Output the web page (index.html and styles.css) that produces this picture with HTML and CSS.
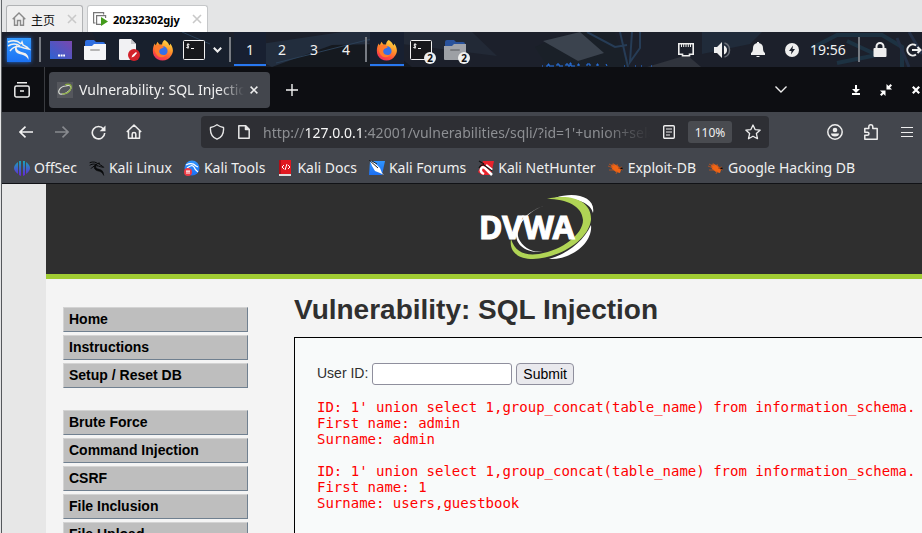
FILE: index.html
```
<!DOCTYPE html>
<html lang="en">
<head>
<meta charset="utf-8">
<title>Vulnerability: SQL Injection</title>
<link rel="stylesheet" href="styles.css">
</head>
<body>
<svg class="defs" aria-hidden="true">
  <defs>
    <linearGradient id="desk" x1="0" y1="1" x2="1" y2="0"><stop offset="0" stop-color="#2d62d2"/><stop offset="1" stop-color="#7b47ae"/></linearGradient>
    <linearGradient id="flame" x1=".8" y1="0" x2=".3" y2="1"><stop offset="0" stop-color="#ffe14a"/><stop offset=".4" stop-color="#ff9a2a"/><stop offset=".75" stop-color="#ff4f38"/><stop offset="1" stop-color="#ec2e63"/></linearGradient>
    <linearGradient id="off" x1="0" y1="0" x2="0" y2="1"><stop offset="0" stop-color="#16a5b8"/><stop offset="1" stop-color="#6722dc"/></linearGradient>
    <linearGradient id="kaliblue" x1="0" y1="0" x2="0" y2="1"><stop offset="0" stop-color="#2f95ff"/><stop offset="1" stop-color="#1c6ff2"/></linearGradient>
    <symbol id="dragon" viewBox="0 0 24 24">
      <path d="M1 4C6 2 11 3 14 6M1 8c5-3 9-2 12 0M3 13c3-4 7-5 11-4M14 6l1-2 1 3 4 2 2 2-5-1-3-1" fill="none" stroke="currentColor" stroke-width="1.5"/>
      <path d="M12 6c-2 1-3 3-2 5 2 4 9 2 11 7 1 2 0 4 1 5-1-3-3-5-6-6-4-1-8-2-8-6 0-3 1-4 4-5z" fill="currentColor"/>
    </symbol>
    <symbol id="firefox" viewBox="0 0 24 24">
      <path d="M14 1c4 3 4 4 5 6 1-1 1-2 1-2 3 4 4 9 1 13a11 11 0 0 1-19 0C0 14 1 8 3 5l1 2 2-4 2 3 3 0c0-2 1-4 3-5z" fill="url(#flame)"/>
      <circle cx="12" cy="13" r="5" fill="#356fe8"/>
      <path d="M3 8c3-2 6-2 8-1l2 2-4 2c-2 2-1 5 1 6 3 1 5 0 6-1-1 3-5 5-9 3-3-2-5-7-4-11z" fill="#ff7a2c"/>
      <path d="M12 7c5 0 7 4 6 8 1-6-2-7-6-8z" fill="#ffd43b"/>
    </symbol>
    <symbol id="term" viewBox="0 0 22 20">
      <rect x=".5" y=".5" width="21" height="19" rx="1" fill="#17181b" stroke="#f1f1f1"/>
      <path d="M6.500 4.700C4.500 3.700 3 5 4.500 5.800S6.500 8 3.300 7.500M5 3.300v5.400M8 8.500h3" fill="none" stroke="#fff"/>
    </symbol>
    <symbol id="folder" viewBox="0 0 22 20">
      <path d="M1 2q0-2 2-2h7l2 2h7q2 0 2 2v5H1z" fill="#2e6ee0"/>
      <path d="M0 6h8l2-2h12v15q0 1-1 1H1q-1 0-1-1z" fill="#f4f5f7"/>
      <path d="M7 10h8" stroke="#b5b5b5" stroke-width="2" stroke-linecap="round"/>
    </symbol>
    <symbol id="bug" viewBox="0 0 16 16">
      <path d="M3 5l3-1 4 2 3 4-1 3-4-1-4-3z" fill="#f06414"/>
      <path d="M0 6l5 2M1 10l5 0M5 3l1 3M9 4l1 3M14 7l-4 1 5 2M8 14l1-3M1 4l4 2" stroke="#c2561e" stroke-width=".8"/>
    </symbol>
  </defs>
</svg>

<div class="vm-tabs">
  <div class="vm-tab">
    <svg width="14" height="14" viewBox="0 0 14 14" fill="none" stroke="#8a8a8a" stroke-width="1.400"><path d="M.7 7.300 7 1l6.300 6.300M2.500 6v7.200h3V8.500h3v4.700h3V6"/></svg>
    <span>主页</span>
    <button aria-label="关闭 主页"><svg width="10" height="10" viewBox="0 0 10 10" stroke="#c9c9c9" stroke-width="1.600"><path d="m1 1 8 8M9 1 1 9"/></svg></button>
  </div>
  <div class="vm-tab active">
    <svg width="15" height="14" viewBox="0 0 15 14" fill="none"><path d="M2.500 11H.6V.6h10v2M8 12.400H3.600V3.600h9V6" stroke="#777" stroke-width="1.200"/><path d="m8 5 7 4.500L8 14z" fill="#439b1b"/></svg>
    <span>20232302gjy</span>
    <button aria-label="关闭"><svg width="10" height="10" viewBox="0 0 10 10" stroke="#c9c9c9" stroke-width="1.600"><path d="m1 1 8 8M9 1 1 9"/></svg></button>
  </div>
</div>

<div class="guest">
  <header class="panel">
    <svg class="wallpaper" viewBox="0 0 920 35" preserveAspectRatio="none" aria-hidden="true">
      <path d="M90 0h135l35 35H110z" fill="#18202d"/><path d="m90 34 110-24M232 16 340 0l55 0-30 10 40 25H270z" fill="#222d3d"/>
      <path d="m270 35 60-22 50-1 30 23z" fill="#15191f"/><path d="m274 31 95-24M180 0l28 12" stroke="#2b4057"/>
      <path d="M395 0h75l25 24-95-12z" fill="#222936"/><path d="m533 15 20-9 25-6h34l14 35h-80z" fill="#1a2028"/>
      <path d="m541 9 37-9 24 21-26 8z" fill="#3b434e"/><path d="m585 0 28 15 12-2M618 0l8 35M630 0l-2 30 10-14V0" fill="none" stroke="#263c56" stroke-width="2"/>
      <path d="m645 35 40-12 14 12z" fill="#30343d"/><path d="M700 0h60l-12 12-48 10z" fill="#202b3a"/>
      <path d="m810 16 25-13h45l20 12v20M835 31l40-8-30-14" fill="none" stroke="#1d3242" stroke-width="4"/>
      <path d="m895 6 12 29M907 0l13 22" stroke="#232f45" stroke-width="3"/>
      <path d="M540 34h1m3 0h2v-2h1v2h5m3 0v-2h2v2h4m3 0v-2h2v2h2v-3h1v3h4m3 0v-2h1v2m8 0v-2h3v2m7 0v-2h1v2m8-2 1 2m17 0h1m10 0h1m5 0h1m9 0h1" fill="none" stroke="#2878f0"/>
    </svg>
    <button class="kali" aria-label="Applications"><svg width="24" height="24"><use href="#dragon"/></svg></button>
    <i class="sep"></i>
    <button class="launch" aria-label="Show desktop"><svg width="22" height="18" viewBox="0 0 22 18"><path d="M0 0h22v18H0z" fill="url(#desk)"/><path d="M8 14.500h7" stroke="#fff" stroke-width="2" stroke-dasharray="2 .6"/></svg></button>
    <button class="launch" aria-label="Files"><svg width="22" height="20"><use href="#folder"/></svg></button>
    <button class="launch" aria-label="Text editor"><svg width="22" height="22" viewBox="0 0 22 22"><path d="M2 0h11l5 5v15q0 1-1 1H2q-1 0-1-1V1q0-1 1-1z" fill="#f1f1f3"/><path d="m13 0 5 5h-5z" fill="#c6c6ca"/><circle cx="16" cy="16" r="6" fill="#d3222b"/><path d="m13.500 18.500 1-2.500 3.500-3 1 1-3 3.500z" fill="#fff"/></svg></button>
    <button class="launch" aria-label="Firefox"><svg width="22" height="22"><use href="#firefox"/></svg></button>
    <button class="launch slim" aria-label="Terminal"><svg width="22" height="20"><use href="#term"/></svg></button>
    <button class="more" aria-label="More terminals"><svg width="9" height="6" viewBox="0 0 9 6" fill="none" stroke="#eee" stroke-width="2"><path d="m.8.8 3.700 3.700L8.200.8"/></svg></button>
    <i class="sep"></i>
    <nav class="spaces">
      <button class="on">1</button><button>2</button><button>3</button><button>4</button>
    </nav>
    <i class="sep"></i>
    <button class="launch on" aria-label="Firefox window"><svg width="22" height="22"><use href="#firefox"/></svg></button>
    <button class="launch" aria-label="Terminal windows"><svg width="22" height="20"><use href="#term"/></svg><b class="badge">2</b></button>
    <button class="launch" aria-label="File windows"><svg class="dim" width="22" height="20"><use href="#folder"/></svg><b class="badge">2</b></button>
    <div class="tray">
      <button aria-label="Network"><svg width="16" height="14" viewBox="0 0 16 14" fill="none" stroke="#eee" stroke-width="1.600"><path d="M.8.8h14.400v10.400h-3.700v1.500h-7v-1.500H.8z"/><path d="M3.500 1v3m2.200-3v3M8 1v3m2.300-3v3m2.200-3v3" stroke-width="1"/></svg></button>
      <button aria-label="Volume"><svg width="18" height="16" viewBox="0 0 18 16"><path d="M1 5h3l5-5v16l-5-5H1z" fill="#eee"/><path d="M11 3.500q3 1.500 3 4.500t-3 4.500z" fill="#eee"/><path d="M11.500 1q5 1.500 5 7t-5 7" fill="none" stroke="#666b74" stroke-width="1.500"/></svg></button>
      <button aria-label="Notifications"><svg width="14" height="15" viewBox="0 0 14 15" fill="#eee"><path d="M6 0h2v1q4 1 4 5 0 4 2 5v2H0v-2q2-1 2-5 0-4 4-5zM5 14h4l-1 1H6z"/></svg></button>
      <button class="power" aria-label="Power"><svg width="14" height="14" viewBox="0 0 14 14"><circle cx="7" cy="7" r="7" fill="#eee"/><path d="M8 2.500 4 8h2.500L6 11.500 10 6H7.500z" fill="#1c212c"/></svg></button>
      <time>19:56</time>
      <i class="sep"></i>
      <button class="lock" aria-label="Lock"><svg width="14" height="15" viewBox="0 0 14 15"><path d="M3.500 8V4.500a3.500 3.500 0 0 1 7 0V8" fill="none" stroke="#eee" stroke-width="2"/><rect x=".5" y="6" width="13" height="9" rx="1" fill="#eee"/></svg></button>
      <button class="lock" aria-label="Log out"><svg width="16" height="14" viewBox="0 0 16 14" fill="none" stroke="#eee" stroke-width="2"><path d="M10 2.500a5.500 5.500 0 1 0 0 9M6 7h8M11.500 4l3 3-3 3"/></svg></button>
    </div>
  </header>

  <div class="tabbar">
    <button class="view" aria-label="Firefox view"><svg width="16" height="16" viewBox="0 0 16 16" fill="none" stroke="#eee" stroke-width="1.500"><path d="M3 .8h10M2.500 4h11q1.700 0 1.700 1.700v7.600q0 1.700-1.700 1.700h-11Q.8 15 .8 13.300V5.700Q.8 4 2.500 4zM6 9h4"/></svg></button>
    <div class="tab">
      <svg width="16" height="16" viewBox="0 0 16 16"><path d="M0 0h16v16H0z" fill="#55575d"/><path d="M9 4C3 4 0 10 3 12c4 1 10-2 11-6 0-3-3-3-5-2" fill="none" stroke="#d7dad2" stroke-width="1.200"/><path d="M8 3c4-2 7 0 6 3-1 4-5 6-9 6" fill="none" stroke="#8bac42" stroke-width="1.200"/></svg>
      <span class="tab-title">Vulnerability: SQL Injection</span>
      <button aria-label="Close tab"><svg width="8" height="8" viewBox="0 0 8 8" stroke="#eee" stroke-width="1.500"><path d="m.6.6 6.800 6.800M7.400.6.6 7.400"/></svg></button>
    </div>
    <button class="plus" aria-label="New tab"><svg width="12" height="12" viewBox="0 0 12 12" stroke="#f3f3f3" stroke-width="1.400"><path d="M6 0v12M0 6h12"/></svg></button>
    <div class="winctl">
      <button class="alltabs" aria-label="List all tabs"><svg width="12" height="7" viewBox="0 0 12 7" fill="none" stroke="#eee" stroke-width="1.400"><path d="m.5.5 5.500 5.500L11.500.5"/></svg></button>
      <button aria-label="Minimize"><svg width="8" height="10" viewBox="0 0 8 10" fill="#fff"><path d="M3 0h2v4h3L4 8 0 4h3zM0 8h8v2H0z"/></svg></button>
      <button aria-label="Restore"><svg width="12" height="12" viewBox="0 0 12 12" fill="#fff"><path d="M6.500 0v5.500H12l-2-2L12 1.500 10.500 0l-2 2zM0 6.500h5.500V12l-2-2-2 2L0 10.500l2-2z"/></svg></button>
      <button aria-label="Close"><svg width="8" height="8" viewBox="0 0 8 8" stroke="#fff" stroke-width="2.200"><path d="m.8.8 6.400 6.400M7.200.8.8 7.200"/></svg></button>
    </div>
  </div>

  <div class="toolbar">
    <button aria-label="Back"><svg width="14" height="12" viewBox="0 0 14 12" fill="none" stroke="#f3f3f3" stroke-width="1.600"><path d="M14 6H1M6.500.6 1 6l5.500 5.400"/></svg></button>
    <button aria-label="Forward"><svg width="14" height="12" viewBox="0 0 14 12" fill="none" stroke="#888a8f" stroke-width="1.600"><path d="M0 6h13M7.500.6 13 6l-5.500 5.400"/></svg></button>
    <button aria-label="Reload"><svg width="15" height="15" viewBox="0 0 15 15"><path d="M12.500 4A6.200 6.200 0 1 0 13.700 8" fill="none" stroke="#eee" stroke-width="1.600"/><path d="M14.500.5v5.800H8.700z" fill="#eee"/></svg></button>
    <button aria-label="Home"><svg width="16" height="16" viewBox="0 0 16 16" fill="none" stroke="#eee" stroke-width="1.500" stroke-linejoin="round"><path d="M.8 8 8 1l7.200 7M2.500 7v7.200h11V7M6.200 14v-4q0-1.500 1.800-1.500T9.800 10v4"/></svg></button>
    <div class="urlbar">
      <svg width="16" height="16" viewBox="0 0 16 16" fill="none" stroke="#e6e6e6" stroke-width="1.400" stroke-linejoin="round"><path d="M8 .8q3 2.200 6.500 2.700.8 9-6.500 11.700Q.7 12.500 1.500 3.500 5 3 8 .8z"/></svg>
      <svg width="12" height="14" viewBox="0 0 12 14" fill="none" stroke="#e6e6e6" stroke-width="1.500" stroke-linejoin="round"><path d="M.8.8h6.700l3.700 3.700v8.700H.8z"/><path d="M7.500.8v3.700h3.700z" fill="#e6e6e6"/></svg>
      <span class="url">http://<strong>127.0.0.1</strong>:42001/vulnerabilities/sqli/?id=1'+union+select+1</span>
      <svg width="12" height="14" viewBox="0 0 12 14" fill="none" stroke="#eee" stroke-width="1.400"><rect x=".7" y=".7" width="10.600" height="12.600" rx="1"/><path d="M3 4h6M3 7h6M3 10h4" stroke-width="1.200"/></svg>
      <button class="zoom">110%</button>
      <svg width="16" height="16" viewBox="0 0 16 16" fill="none" stroke="#eee" stroke-width="1.300" stroke-linejoin="round"><path d="m8 1 2.100 4.600 5.100.5-3.800 3.500 1.100 5.100L8 12.200l-4.500 2.500 1.100-5.100L.8 6.100l5.100-.5z"/></svg>
    </div>
    <button class="account" aria-label="Account"><svg width="16" height="16" viewBox="0 0 16 16" fill="none" stroke="#eee" stroke-width="1.500"><circle cx="8" cy="8" r="7.200"/><circle cx="8" cy="6" r="2.300" fill="#eee" stroke="none"/><path d="M4 9.500h8q0 3-4 3t-4-3z" fill="#eee" stroke="none"/></svg></button>
    <button class="wide" aria-label="Extensions"><svg width="14" height="16" viewBox="0 0 14 16" fill="none" stroke="#eee" stroke-width="1.500" stroke-linejoin="round"><path d="M.8 15.200v-4h2.500q1.700 0 1.700-1.500T3.300 8.200H.8V4.500h4V3Q4.800.8 6.800.8T8.800 3v1.500h4.400v10.700z"/></svg></button>
    <button class="wide" aria-label="Menu"><svg width="12" height="10" viewBox="0 0 12 10" stroke="#eee" stroke-width="1"><path d="M0 .5h12M0 5.500h12M0 9.500h12"/></svg></button>
  </div>

  <nav class="bookmarks">
    <a href="#"><svg width="16" height="16" viewBox="0 0 16 16" fill="url(#off)"><path d="M7 1v15l-2-1V1zM4 2v12Q0 11 0 8t4-6zM9 1v15l2-1V1zM12 2v12q4-3 4-6t-4-6z"/></svg>OffSec</a>
    <a href="#"><svg class="black" width="16" height="16" viewBox="0 0 24 24" stroke="currentColor"><use href="#dragon"/></svg>Kali Linux</a>
    <a href="#"><svg width="16" height="16" viewBox="0 0 16 16"><circle cx="8" cy="8" r="7.500" fill="url(#kaliblue)"/><path d="M2 5q6-3 10 1l2 1M3 8q5-4 7-1 1 3 4 5" fill="none" stroke="#fff" stroke-width="1.200"/><circle cx="4" cy="12" r="4" fill="#ee3a45"/><path d="M2 11h4M3 11v3m2-3v3" stroke="#fff"/></svg>Kali Tools</a>
    <a href="#"><svg width="16" height="16" viewBox="0 0 16 16"><path d="M2 0h12v14H2z" fill="#e01820"/><path d="M2 0h2v14H2z" fill="#b00f18"/><path d="M2 14h12v2H2z" fill="#ddd"/><path d="M7 5 5 7l2 2M11 5l2 2-2 2M10 4 8 10" fill="none" stroke="#fff"/></svg>Kali Docs</a>
    <a href="#"><svg width="16" height="16" viewBox="0 0 16 16"><path d="M1 1h15l-3 14H0z" fill="url(#kaliblue)"/><path d="m1 1 5 2 5 5 2 5 2 2-4-2-5-2-3-5z" fill="#fff"/><path d="m0 0 9 8M3 1l5 3" stroke="#222"/></svg>Kali Forums</a>
    <a href="#"><svg width="16" height="16" viewBox="0 0 16 16"><path d="m5 1 11 0-3 14H4L0 12z" fill="#e9232d"/><path d="m14 15-7-7q-3-2-4 1t3 5M8 5l6 5" fill="none" stroke="#fff" stroke-width="2.500"/><path d="m1 1 5 3M1 8q2-4 5-3l8 6" fill="none" stroke="#111" stroke-width="1.200"/></svg>Kali NetHunter</a>
    <a href="#"><svg width="16" height="16"><use href="#bug"/></svg>Exploit-DB</a>
    <a href="#"><svg width="16" height="16"><use href="#bug"/></svg>Google Hacking DB</a>
  </nav>

  <div class="viewport">
    <div class="site">
      <div class="masthead">
        <svg width="124" height="68" viewBox="0 0 124 68" role="img" aria-label="DVWA">
          <path d="M76 4C96-3 117 3 114 19c-2-10-17-16-38-15z" fill="#fff"/>
          <path d="M68 5C92-1 113 7 112 26c-3 21-32 38-58 39-16 0-24-8-22-20 4 13 14 17 28 15 24-4 44-20 44-34C103 12 88 5 68 5z" fill="#b0d455"/>
          <path d="M112 31c2 17-18 35-42 34 18-5 34-17 42-34z" fill="#fff"/>
          <path d="M72 9C48 16 33 34 41 47c5 8 13 11 23 11-19 1-28-8-27-20 1-11 15-23 35-29z" fill="#fff"/>
          <text x="0" y="45">DVWA</text>
        </svg>
      </div>
      <div class="columns">
        <nav class="menu">
          <ul>
            <li><a href="#">Home</a></li>
            <li><a href="#">Instructions</a></li>
            <li><a href="#">Setup / Reset DB</a></li>
          </ul>
          <ul>
            <li><a href="#">Brute Force</a></li>
            <li><a href="#">Command Injection</a></li>
            <li><a href="#">CSRF</a></li>
            <li><a href="#">File Inclusion</a></li>
            <li><a href="#">File Upload</a></li>
          </ul>
        </nav>
        <main>
          <h1>Vulnerability: SQL Injection</h1>
          <section class="box">
            <form>
              <label for="uid">User ID:</label>
              <input id="uid" type="text">
              <button type="button">Submit</button>
            </form>
            <pre>ID: 1' union select 1,group_concat(table_name) from information_schema.
First name: admin
Surname: admin</pre>
            <pre>ID: 1' union select 1,group_concat(table_name) from information_schema.
First name: 1
Surname: users,guestbook</pre>
          </section>
        </main>
      </div>
    </div>
  </div>
</div>
</body>
</html>
```
FILE: styles.css
```
* { box-sizing: border-box; }

body {
  margin: 0;
  height: 100vh;
  display: flex;
  flex-direction: column;
  overflow: hidden;
  background: #e4e5e6;
  font-family: "Noto Sans", "Noto Sans CJK SC", sans-serif;
  font-size: 14px;
  color: #f0f0f0;
}

button {
  padding: 0;
  border: 0;
  background: none;
  color: inherit;
  font: inherit;
}

svg { display: block; flex: none; }
.defs { position: absolute; width: 0; height: 0; }

/* Virtual machine tabs */
.vm-tabs {
  flex: none;
  display: flex;
  align-items: flex-end;
  gap: 4px;
  height: 32px;
  padding-left: 4px;
  margin-left: 1px;
  border-left: 1px solid #63676b;
}
.vm-tab {
  display: flex;
  align-items: center;
  gap: 5px;
  height: 27px;
  padding: 0 5px;
  border: 1px solid #b1b3b5;
  border-bottom: 0;
  border-radius: 3px 3px 0 0;
  background: #f0f0f0;
  color: #111;
  font: 12px "Noto Sans CJK SC", sans-serif;
}
.vm-tab button { margin-left: 7px; }
.vm-tab.active {
  background: #fff;
  border-color: #c5c7c9;
  color: #000;
  font: bold 11px "Noto Sans", sans-serif;
}

.guest {
  flex: 1;
  min-height: 0;
  display: flex;
  flex-direction: column;
  margin-left: 1px;
  border-left: 1px solid #55585c;
  overflow: hidden;
}

/* Desktop panel */
.panel {
  position: relative;
  z-index: 0;
  flex: none;
  display: flex;
  align-items: center;
  height: 35px;
  background: #1c202b;
  overflow: hidden;
}
.wallpaper {
  position: absolute;
  z-index: -1;
  inset: 0;
  width: 100%;
  height: 100%;
}
.panel button {
  display: flex;
  flex: none;
  align-items: center;
  justify-content: center;
  height: 35px;
}
.panel .kali {
  width: 24px;
  height: 24px;
  margin: 0 5px;
  background: linear-gradient(#3299ff, #1c72f3);
  box-shadow: 0 0 4px #1e70e8;
}
.sep {
  flex: none;
  width: 2px;
  height: 25px;
  margin: 0 3px;
  background: #777b82;
}
.panel .launch { position: relative; width: 34px; }
.panel .slim { width: 28px; }
.panel .more { width: 18px; }
.spaces { display: flex; font-size: 14px; }
.panel .spaces button { width: 32px; }
.panel .on {
  background: #182031;
  box-shadow: inset 0 -1px #1c202b, inset 0 -3px #2878f0;
}
.dim { opacity: .6; }
.badge {
  position: absolute;
  right: 2px;
  bottom: 3px;
  width: 12px;
  height: 12px;
  border-radius: 50%;
  background: #eee;
  color: #111;
  font: bold 10px/12px "Noto Sans", sans-serif;
}
.tray {
  display: flex;
  align-items: center;
  margin-left: auto;
  margin-right: -9px;
}
.tray button { width: 36px; }
.tray .power { width: 32px; }
.tray .lock { width: 34px; }
.tray time { width: 47px; padding-left: 2px; }

/* Browser tab strip */
.tabbar {
  flex: none;
  display: flex;
  align-items: center;
  height: 45px;
  background: #0d0e12;
}
.tabbar button, .toolbar button {
  display: flex;
  flex: none;
  align-items: center;
  justify-content: center;
}
.tabbar .view { width: 43px; height: 45px; border-right: 1px solid #393b40; }
.view svg { margin-right: 2px; }
.tab {
  display: flex;
  align-items: center;
  gap: 6px;
  width: 221px;
  height: 36px;
  margin-left: 4px;
  padding: 0 12px 0 8px;
  border-radius: 4px;
  background: #43464d;
}
.tab-title {
  flex: 1;
  overflow: hidden;
  white-space: nowrap;
  mask-image: linear-gradient(to left, transparent, #000 24px);
}
.plus { width: 44px; height: 36px; }
.winctl { display: flex; align-items: center; margin-left: auto; margin-right: -9px; }
.winctl button { width: 30px; height: 36px; }
.winctl .alltabs { margin-right: 45px; }

/* Navigation toolbar */
.toolbar {
  flex: none;
  display: flex;
  align-items: center;
  height: 40px;
  padding-left: 6px;
  background: #43464d;
}
.toolbar button { width: 36px; height: 32px; }
.urlbar {
  flex: 1;
  display: flex;
  align-items: center;
  min-width: 0;
  height: 32px;
  gap: 13px;
  margin-left: 49px;
  padding: 0 8px;
  border-radius: 4px;
  background: #2e2f34;
}
.url {
  flex: 1;
  overflow: hidden;
  white-space: nowrap;
  color: #8d8f93;
  mask-image: linear-gradient(to left, transparent, #000 48px);
}
.url strong { color: #f6f6f6; font-weight: 400; }
.toolbar .zoom {
  width: 44px;
  height: 22px;
  border-radius: 3px;
  background: #494b50;
  font-size: 12px;
}
.toolbar .account { margin-left: 48px; }
.toolbar .wide:last-child { margin-right: -3px; }

.bookmarks {
  flex: none;
  display: flex;
  align-items: center;
  gap: 12px;
  height: 32px;
  padding-left: 12px;
  border-bottom: 1px solid #111216;
  background: #43464d;
}
.bookmarks a {
  display: flex;
  flex: none;
  align-items: center;
  gap: 4px;
  color: #f0f0f0;
  text-decoration: none;
}
.black { color: #08090a; }

/* Web page */
.viewport {
  flex: 1;
  min-height: 0;
  padding-left: 44px;
  overflow: hidden;
  background: #e7e7e7;
  color: #2f2f2f;
  font: 14px "Liberation Sans", sans-serif;
}
.site { width: 990px; min-height: 100%; background: #f4f4f4; }
.masthead {
  display: flex;
  justify-content: center;
  padding: 10px 0 12px;
  border-bottom: 5px solid #a1cc33;
  background: #2f2f2f;
}
.masthead text {
  fill: #fff;
  stroke: #fff;
  font: bold 32px "Noto Sans", sans-serif;
}
.columns { display: flex; gap: 46px; padding-left: 17px; }
.menu { width: 185px; padding-top: 28px; }
.menu ul {
  display: flex;
  flex-direction: column;
  gap: 3px;
  margin: 0 0 22px;
  padding: 0;
  list-style: none;
}
.menu a {
  display: block;
  height: 25px;
  padding-left: 5px;
  border: 1px solid;
  border-color: #d3d3d3 #708090 #708090 #d3d3d3;
  background: #bebebe;
  color: #000;
  font-size: 14px;
  line-height: 23px;
  font-weight: bold;
  text-decoration: none;
}
main { flex: 1; }
h1 {
  margin: 14px 0 11px;
  font-size: 28px;
  line-height: 33px;
}
.box {
  min-height: 300px;
  padding: 25px 22px;
  border: 1px solid #000;
  background: #f8fafa;
}
form { display: flex; gap: 4px; }
label { line-height: 20px; }
.box input {
  width: 140px;
  height: 22px;
  border: 1px solid #8f8f9d;
  border-radius: 3px;
  background: #fff;
}
.box button {
  height: 22px;
  padding: 0 6px;
  border: 1px solid #8f8f9d;
  border-radius: 4px;
  background: #e9e9ed;
  color: #000;
}
pre {
  margin: 14px 0 16px;
  color: #f00;
  font: 14px/16px "DejaVu Sans Mono", monospace;
}
```
